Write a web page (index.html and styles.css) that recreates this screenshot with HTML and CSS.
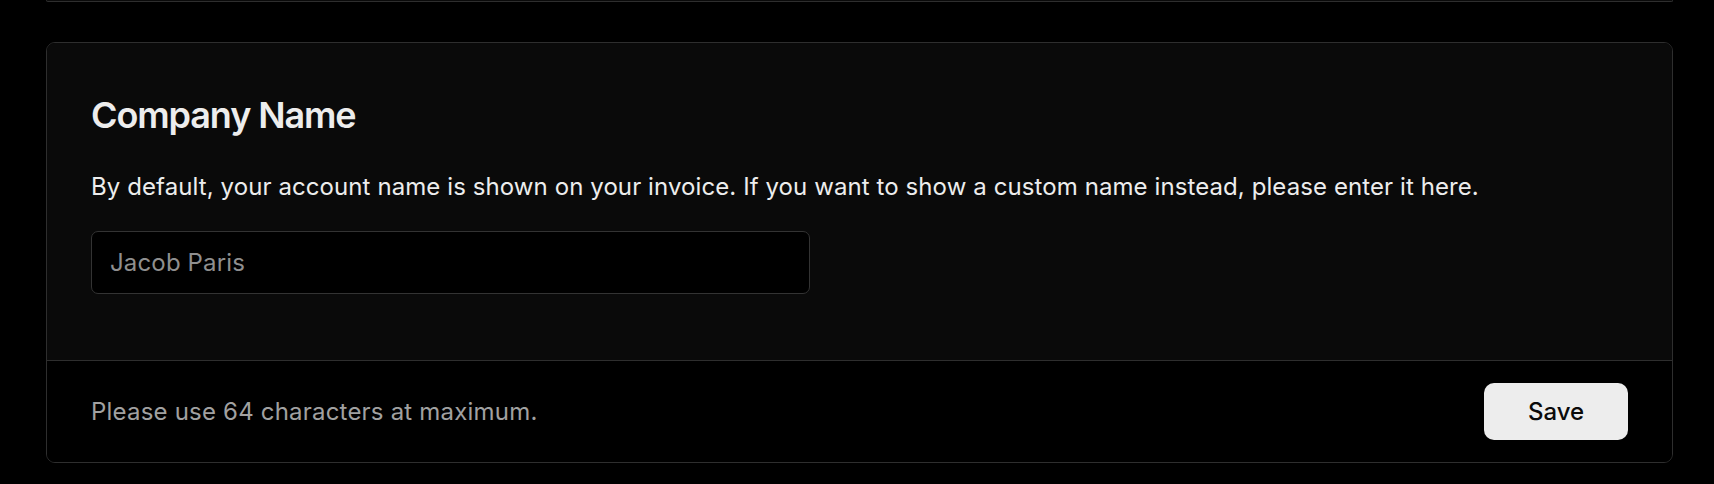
FILE: index.html
```html
<!DOCTYPE html>
<html lang="en">
<head>
<meta charset="utf-8">
<title>Company Name</title>
<link rel="stylesheet" href="styles.css">
</head>
<body>
<div class="page">
  <div class="prev-card"></div>
  <form class="card">
    <div class="card-body">
      <h2 class="card-title">Company Name</h2>
      <p class="card-desc">By default, your account name is shown on your invoice. If you want to show a custom name instead, please enter it here.</p>
      <input class="text-input" type="text" placeholder="Jacob Paris">
    </div>
    <div class="card-footer">
      <span class="footer-note">Please use 64 characters at maximum.</span>
      <button class="save-btn" type="button">Save</button>
    </div>
  </form>
</div>
</body>
</html>
```
FILE: styles.css
```css
* { box-sizing: border-box; }
html, body { margin: 0; padding: 0; background: #000; }
body {
  font-family: Inter, "Noto Sans", "Liberation Sans", sans-serif;
  color: #ededed;
  width: 1714px;
  height: 484px;
  overflow: hidden;
}
.page {
  padding-left: 46px;
  display: flex;
  flex-direction: column;
  gap: 40px;
}
.prev-card {
  width: 1627px;
  height: 2px;
  border: 1px solid #2e2e2e;
  border-top: none;
  border-radius: 0 0 9px 9px;
  background: #0a0a0a;
}
.card {
  width: 1627px;
  border: 1px solid #2e2e2e;
  border-radius: 9px;
  overflow: hidden;
  margin: 0;
}
.card-body {
  background: #0a0a0a;
  padding: 50px 44px 66px;
  display: flex;
  flex-direction: column;
}
.card-title {
  margin: 0;
  font-size: 36px;
  line-height: 44px;
  font-weight: 600;
  letter-spacing: -1.1px;
  color: #ededed;
}
.card-desc {
  margin: 34px 0 0;
  font-size: 24px;
  line-height: 32px;
  letter-spacing: 0.09px;
  color: #ededed;
}
.text-input {
  margin-top: 28px;
  width: 719px;
  height: 63px;
  background: #000;
  border: 1px solid #333;
  border-radius: 7px;
  padding: 0 18px;
  font-family: inherit;
  font-size: 24px;
  letter-spacing: 0.15px;
  color: #ededed;
  outline: none;
}
.text-input::placeholder { color: #8f8f8f; }
.card-footer {
  background: #000;
  border-top: 1px solid #2e2e2e;
  padding: 22px 44px 22px;
  display: flex;
  align-items: center;
  justify-content: space-between;
}
.footer-note {
  font-size: 24px;
  letter-spacing: 0.2px;
  color: #a1a1a1;
}
.save-btn {
  width: 144px;
  height: 57px;
  border: none;
  border-radius: 10px;
  background: #ededed;
  color: #0a0a0a;
  font-family: inherit;
  font-size: 24px;
  font-weight: 500;
  cursor: pointer;
}
```
